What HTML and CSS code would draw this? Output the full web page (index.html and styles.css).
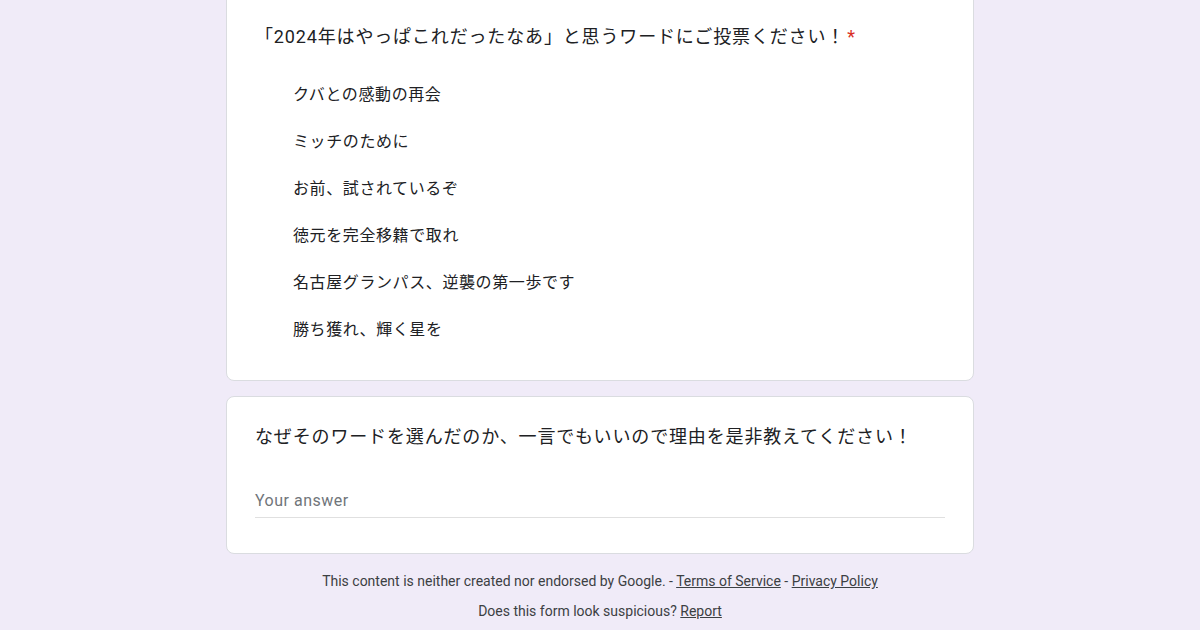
FILE: index.html
```html
<!DOCTYPE html>
<html>

<head>
  <link rel="stylesheet" href="styles.css">
</head>

<body>
  <div class="form">
    <div class="card card-first">
      <div class="question-title">「2024年はやっぱこれだったなあ」と思うワードにご投票ください！<span class="required">*</span></div>
      <div class="options">
        <div class="option">クバとの感動の再会</div>
        <div class="option">ミッチのために</div>
        <div class="option">お前、試されているぞ</div>
        <div class="option">徳元を完全移籍で取れ</div>
        <div class="option">名古屋グランパス、逆襲の第一歩です</div>
        <div class="option">勝ち獲れ、輝く星を</div>
      </div>
    </div>

    <div class="card">
      <div class="question-title">なぜそのワードを選んだのか、一言でもいいので理由を是非教えてください！</div>
      <div class="answer">Your answer</div>
    </div>

    <div class="footer">
      <div class="footer-line">This content is neither created nor endorsed by Google. - <a href="#">Terms of Service</a> - <a href="#">Privacy Policy</a></div>
      <div class="footer-line">Does this form look suspicious? <a href="#">Report</a></div>
    </div>
  </div>
</body>

</html>
```

FILE: styles.css
```css
body {
  margin: 0;
  background-color: #f0ebf8;
  font-family: Roboto, "Noto Sans CJK JP", sans-serif;
  color: #202124;
}

.form {
  width: 748px;
  margin: 0 auto;
  display: flex;
  flex-direction: column;
  gap: 15px;
}

.card {
  background-color: #ffffff;
  border: 1px solid #dadce0;
  border-radius: 8px;
  padding: 28px 28px 35px 28px;
}

.card-first {
  margin-top: -12px;
  border-top-left-radius: 0;
  border-top-right-radius: 0;
  padding-top: 36px;
  padding-bottom: 29px;
}

.question-title {
  font-size: 18px;
  line-height: 24px;
  letter-spacing: 0.85px;
}

.required {
  color: #d93025;
  margin-left: 2px;
}

.options {
  display: flex;
  flex-direction: column;
  margin-top: 20px;
}

.option {
  display: flex;
  align-items: center;
  height: 47px;
  padding-left: 38px;
  font-size: 16px;
  letter-spacing: 0.6px;
}

.answer {
  margin-top: 40px;
  font-size: 16px;
  line-height: 24px;
  letter-spacing: 0.5px;
  color: #70757a;
  padding-bottom: 4px;
  border-bottom: 1px solid #e0e0e0;
}

.footer {
  display: flex;
  flex-direction: column;
  align-items: center;
  padding-top: 4px;
  gap: 14px;
  font-size: 14px;
  line-height: 16px;
  color: #3c4043;
}

.footer a {
  color: #3c4043;
}
```
